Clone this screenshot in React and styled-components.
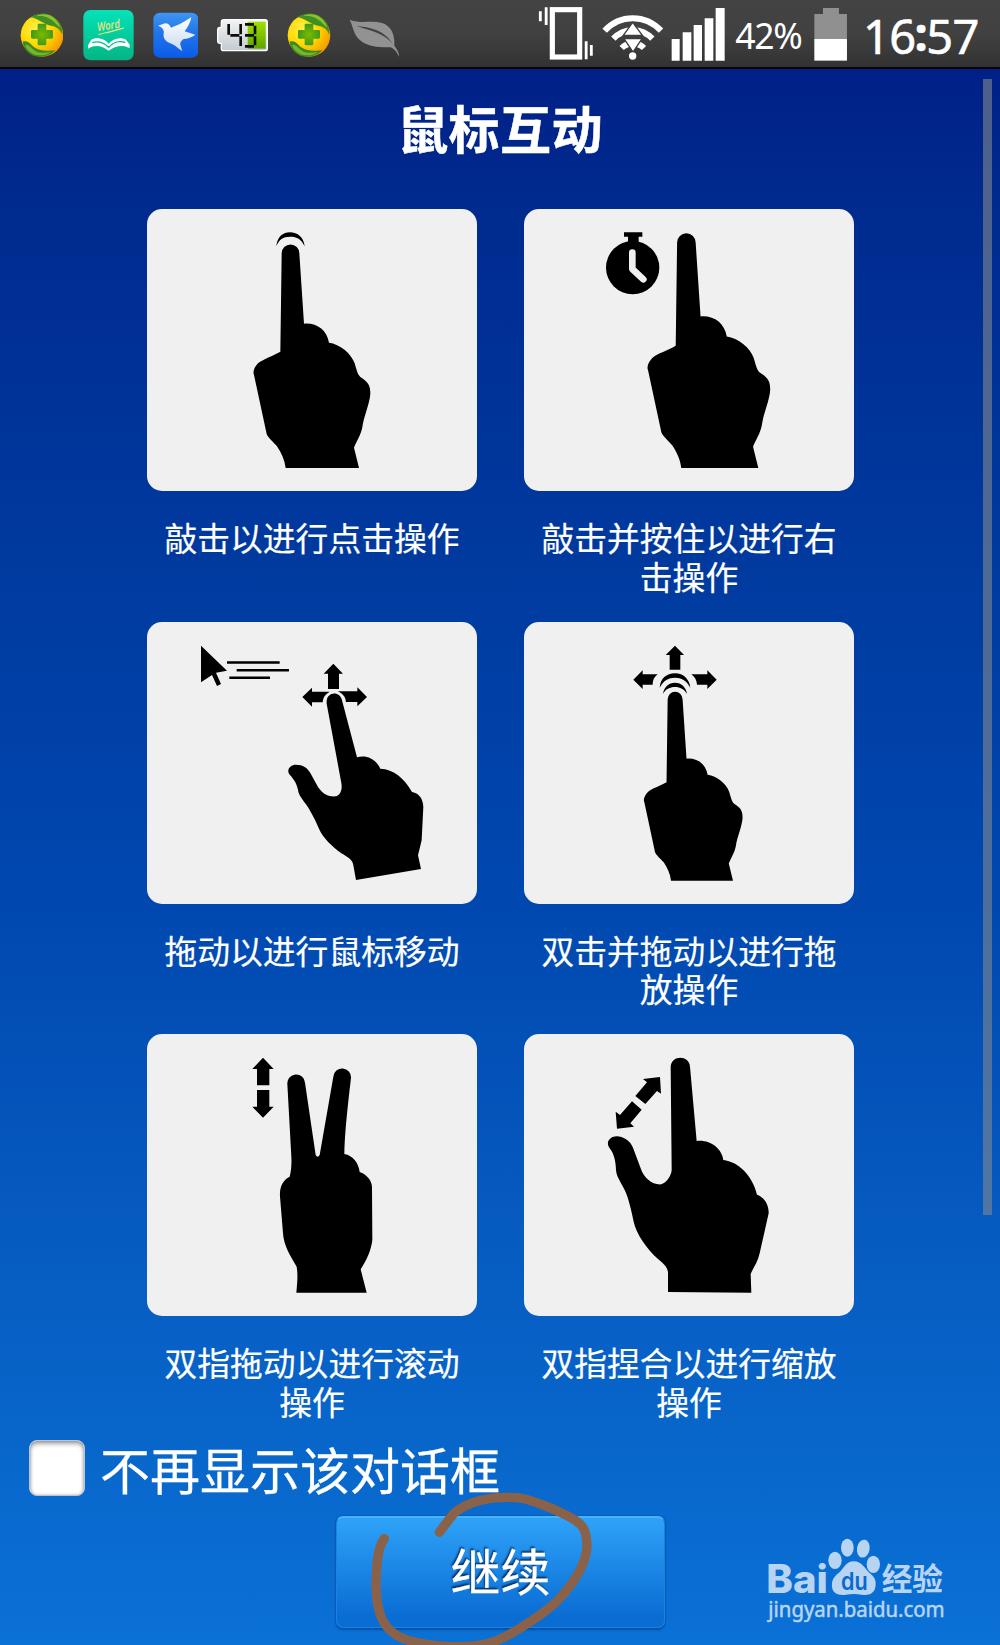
import React from 'react';
import styled, { createGlobalStyle } from 'styled-components';

const GlobalStyle = createGlobalStyle`
  * { box-sizing: border-box; }
  body { margin: 0; background: #0a70d6; }
`;

const cjk = `'Noto Sans CJK SC', 'Noto Sans', sans-serif`;

const Screen = styled.div`
  position: relative;
  display: flex;
  flex-direction: column;
  width: 1000px;
  height: 1645px;
  overflow: hidden;
  color: #fff;
  font-family: ${cjk};
  background: linear-gradient(180deg, #002087 69px, #002a8e 200px, #003a9f 560px, #0048b0 900px, #0659bf 1200px, #0866ca 1440px, #0a71d7 1645px);
`;

const StatusBar = styled.header`
  display: flex;
  flex: none;
  justify-content: space-between;
  height: 69px;
  padding-left: 20px;
  border-bottom: 2px solid #050608;
  background: linear-gradient(180deg, #434343, #414141 50%, #323232);
`;

const Cluster = styled.div`
  display: flex;
  height: 67px;
`;

const Glyph = styled.svg`
  display: block;
  flex: none;
  height: 68px;
  width: ${(p) => p.$w}px;
  margin-right: ${(p) => p.$gap || 0}px;
`;

const StatusText = styled.span`
  font-family: 'Noto Sans', sans-serif;
  font-size: ${(p) => p.$size}px;
  letter-spacing: ${(p) => p.$track || 0}px;
  line-height: ${(p) => p.$line}px;
  width: ${(p) => p.$w}px;
  white-space: nowrap;
  -webkit-text-stroke: ${(p) => p.$stroke || 0}px #fff;
`;

const Colon = styled.span`
  display: inline-block;
  font-weight: 700;
  margin: 0 -1px;
  transform: translateY(-3px);
`;

const Title = styled.h1`
  margin: 21px 0 0;
  height: 75px;
  line-height: 75px;
  text-align: center;
  font-size: 51px;
  letter-spacing: 0.4px;
  font-weight: 700;
  -webkit-text-stroke: 0.5px #fff;
`;

const Grid = styled.main`
  display: grid;
  grid-template-columns: 330px 330px;
  grid-auto-rows: 387.5px;
  gap: 25px 47px;
  margin: 44.3px 0 0 147px;
`;

const Gesture = styled.section`
  display: flex;
  flex-direction: column;
  align-items: center;
`;

const Card = styled.div`
  width: 330px;
  height: 282px;
  border-radius: 15px;
  background: #f0f0f0;
  overflow: hidden;
`;

const Picture = styled.svg`
  display: block;
  width: 330px;
  height: 282px;
`;

const Caption = styled.p`
  width: 304px;
  margin: 27px 0 0;
  font-size: 32.8px;
  line-height: 38.5px;
  font-weight: 400;
  text-align: center;
  -webkit-text-stroke: 0.2px #fff;
`;

const OptOut = styled.label`
  display: flex;
  align-items: center;
  height: 56px;
  margin: 18px 0 0 29px;
`;

const CheckBox = styled.span`
  width: 56px;
  height: 56px;
  margin-right: 15px;
  border-radius: 8px;
  border: 1px solid #b9c4d4;
  background: #fff;
  box-shadow: inset 0 3px 4px rgba(60, 60, 60, 0.45), inset 0 0 3px rgba(60, 60, 60, 0.35);
`;

const OptOutText = styled.span`
  font-size: 50px;
  line-height: 56px;
  font-weight: 400;
  -webkit-text-stroke: 0.3px #fff;
`;

const ContinueButton = styled.button`
  width: 329px;
  height: 112px;
  margin: 20px 0 0 336px;
  padding: 0 0 6px;
  border: 1px solid #1684e0;
  border-top: 2px solid #45b4fb;
  border-radius: 7px;
  background: linear-gradient(180deg, #2ea2f8, #0a6dd4 90%);
  box-shadow: 0 2px 2px #0650a8, 0 0 1px 1px #0a5cba;
  color: #fff;
  font-family: ${cjk};
  font-size: 50px;
  font-weight: 400;
  line-height: 60px;
  text-shadow: -1px -2px 2px rgba(0, 20, 60, 0.75);
  -webkit-text-stroke: 0.3px #fff;
`;

const ScrollThumb = styled.div`
  position: absolute;
  left: 982.5px;
  top: 79px;
  width: 9px;
  height: 1136px;
  background: rgba(128, 136, 144, 0.6);
`;

const Scribble = styled.svg`
  position: absolute;
  left: 320px;
  top: 1480px;
  width: 360px;
  height: 165px;
`;

const Watermark = styled.svg`
  position: absolute;
  left: 740px;
  top: 1500px;
  width: 260px;
  height: 145px;
`;

function Coin({ gap }) {
  return (
    <Glyph viewBox="60 0 130 204" $w={43.3} $gap={gap}>
      <defs>
        <radialGradient id="coin" cx="0.35" cy="0.35" r="0.75">
          <stop offset="0" stopColor="#fff04a" />
          <stop offset="0.5" stopColor="#ffd800" />
          <stop offset="1" stopColor="#f59000" />
        </radialGradient>
        <radialGradient id="plus">
          <stop offset="0" stopColor="#7fb800" />
          <stop offset="1" stopColor="#3f9a1c" />
        </radialGradient>
      </defs>
      <circle cx="126" cy="106" r="64" fill="url(#coin)" />
      <path d="M92 52C120 34 152 38 170 59C184 73 189 91 187 104C181 88 170 80 156 78C132 74 113 55 92 52Z" fill="#3f8f22" />
      <path d="M108 49C130 44 150 53 163 66C171 75 177 80 181 83C176 67 165 53 149 46C133 40 119 42 108 49Z" fill="#8fc12e" />
      <path d="M68 125C78 121 88 126 98 138C115 154 145 153 166 151C150 170 122 174 100 167C82 159 70 143 68 125Z" fill="#3a8a20" />
      <path d="M75 135C86 132 94 145 106 153C121 161 139 159 153 156C140 169 112 168 98 161C87 155 78 146 75 135Z" fill="#77b52c" />
      <path d="M116 71H136Q139 71 139 75V90H155Q159 90 159 94V112Q159 116 155 116H139V132Q139 136 135 136H117Q113 136 113 132V116H97Q93 116 93 112V94Q93 90 97 90H113V75Q113 71 116 71Z" fill="url(#plus)" />
    </Glyph>
  );
}

function WordIcon() {
  return (
    <Glyph viewBox="249 0 153 204" $w={51} $gap={18.7}>
      <defs>
        <linearGradient id="word" x1="0" y1="0" x2="0" y2="1">
          <stop offset="0" stopColor="#05e3b9" />
          <stop offset="1" stopColor="#04b584" />
        </linearGradient>
      </defs>
      <rect x="250" y="30" width="151" height="151" rx="21" fill="url(#word)" />
      <text x="293" y="94" transform="rotate(-9 293 94)" fontFamily="'Open Sans', sans-serif" fontStyle="italic" fontWeight="600" fontSize="36" textLength="69" lengthAdjust="spacingAndGlyphs" fill="#e7e67c">Word</text>
      <path d="M295 104L371 84L320 99" fill="none" stroke="#e7e67c" strokeWidth="3" />
      <path d="M274 119C295 109 315 118 326 131C338 117 359 109 378 119L389 134V144C365 132 345 139 326 152C307 139 287 132 264 146V136Z" fill="#fff" />
      <path d="M277 128C296 121 315 130 326 142C338 129 357 121 376 128" fill="none" stroke="#05b98c" strokeWidth="4" />
    </Glyph>
  );
}

function BirdIcon() {
  return (
    <Glyph viewBox="457 0 137 204" $w={45.7} $gap={18.3}>
      <defs>
        <linearGradient id="sky" x1="0" y1="0" x2="0" y2="1">
          <stop offset="0" stopColor="#3f95f3" />
          <stop offset="0.45" stopColor="#2175e8" />
          <stop offset="1" stopColor="#0c5bea" />
        </linearGradient>
        <linearGradient id="wing" x1="0" y1="0" x2="0" y2="1">
          <stop offset="0" stopColor="#fff" />
          <stop offset="1" stopColor="#c9daf1" />
        </linearGradient>
      </defs>
      <rect x="458" y="38" width="135" height="135" rx="20" fill="url(#sky)" />
      <path d="M472 77L487 72C495 67 506 71 511 83C529 78 551 65 572 52C569 67 562 81 552 94L584 104C575 112 560 116 549 117C542 121 538 128 539 134L545 154C529 141 517 131 505 128C493 122 487 113 489 101C491 91 487 82 472 77Z" fill="url(#wing)" />
    </Glyph>
  );
}

function ChargeIcon() {
  return (
    <Glyph viewBox="649 0 153 204" $w={51} $gap={19.7}>
      <defs>
        <linearGradient id="shell" x1="0" y1="0" x2="0" y2="1">
          <stop offset="0" stopColor="#f2f3f4" />
          <stop offset="1" stopColor="#c3cbd0" />
        </linearGradient>
        <linearGradient id="juice" x1="0" y1="0" x2="0" y2="1">
          <stop offset="0" stopColor="#a0e000" />
          <stop offset="1" stopColor="#5fa400" />
        </linearGradient>
      </defs>
      <path d="M669 59H793Q800 59 800 66V146Q800 152 793 152H669Q662 152 662 146V130H658Q651 130 651 123V89Q651 82 658 82H662V66Q662 59 669 59Z" fill="url(#shell)" stroke="#fff" strokeWidth="4" />
      <rect x="741" y="65" width="54" height="81" fill="url(#juice)" />
      <path d="M684 72V104M720 72V103M720 109V138M689 106H716M733 73H760M763 77V103M763 109V136M733 106H760M733 139H760" fill="none" stroke="#0a0d08" strokeWidth="8" />
    </Glyph>
  );
}

function LeafIcon() {
  return (
    <Glyph viewBox="1048 0 154 204" $w={51.3}>
      <path d="M1050 59C1082 72 1115 61 1145 68C1174 76 1187 104 1184 137C1192 147 1199 159 1199 171C1192 157 1185 148 1174 142C1138 143 1105 139 1084 123C1061 106 1060 77 1050 59Z" fill="#929292" />
      <path d="M1070 77C1101 83 1148 82 1180 132C1149 96 1114 94 1070 77Z" fill="#424242" />
    </Glyph>
  );
}

function VibrateIcon() {
  return (
    <Glyph viewBox="115 0 168 204" $w={56} $gap={8.3}>
      <rect x="158" y="29" width="82" height="142" fill="none" stroke="#fff" strokeWidth="15.5" />
      <path d="M122 34V64M139.500 22V75M259.500 124V178M275 135V167" stroke="#fff" strokeWidth="8.500" />
    </Glyph>
  );
}

function WifiIcon() {
  return (
    <Glyph viewBox="308 0 185 204" $w={61.7} $gap={7}>
      <g fill="none" stroke="#fff" strokeWidth="18">
        <path d="M316 92C362 42 438 42 485 92" />
        <path d="M342 116C374 82 427 82 459 116" />
        <path d="M367 144C385 126 416 126 434 144" />
      </g>
      <path d="M400 67L429 106H372Z" fill="#fff" stroke="#3e3e3e" strokeWidth="4" />
      <path d="M374 116H428L401 156Z" fill="#fff" stroke="#3c3c3c" strokeWidth="4" />
      <path d="M372 111H430" stroke="#3d3d3d" strokeWidth="7" />
      <circle cx="400" cy="168" r="11" fill="#fff" />
    </Glyph>
  );
}

function SignalIcon() {
  return (
    <Glyph viewBox="514 0 162 204" $w={54} $gap={10.5}>
      <path d="M516 117H540V182H516ZM549 97H575V182H549ZM582 75H607V182H582ZM615 55H641V182H615ZM648 24H675V182H648Z" fill="#fff" />
    </Glyph>
  );
}

function BatteryIcon() {
  return (
    <Glyph viewBox="945 0 100 204" $w={33.3} $gap={15.5}>
      <path d="M972 24H1020V42H1044V118H946V42H972Z" fill="#909090" />
      <rect x="946" y="117" width="98" height="65" fill="#fff" />
    </Glyph>
  );
}

const pointing = 'M426 160A26.500 26.500 0 0 1 479 160L493 371C532 368 561 390 568 428C600 432 635 460 645 490C652 515 655 525 662 531C685 546 692 555 692 580C691 610 672 650 668 682C664 705 650 725 643 743L658 804H438C435 780 425 758 412 739C400 725 385 713 381 702L343 525C338 513 346 500 355 490C370 477 400 468 422 455Z';

const TapArt = () => (
  <>
    <path d="M410 139C413 110 430 97 451 97C474 97 492 112 495 139C485 117 472 110 451 110C430 110 418 118 410 139Z" />
    <path d={pointing} />
  </>
);

const HoldArt = () => (
  <>
    <path d="M328 97H383V110H372V128H340V110H328Z" />
    <circle cx="354" cy="203" r="80" />
    <path d="M353 158V207L386 238" fill="none" stroke="#f0f0f0" strokeWidth="20" strokeLinecap="round" strokeLinejoin="round" />
    <path d={pointing} transform="translate(40 -40.2) scale(1.05)" />
  </>
);

const MoveArt = () => (
  <>
    <path d="M184 106L262 181L229 187L244 221L232 227L217 194L184 216Z" />
    <path d="M262 156.500H420M291 179.500H448M269 202H391" stroke="#000" strokeWidth="7.500" />
    <path d="M581 160L610 190H598V236H565V190H552ZM488 260L517 232V244H570V276H517V289ZM682 260L653 231V243H596V275H653V288Z" />
    <circle cx="584" cy="277" r="35" fill="#f0f0f0" />
    <path d="M561 280C557 242 602 240 607 270L652 441C680 433 708 445 722 475C762 476 795 505 817 545C840 548 851 570 851 590L846 690L835 735L844 776L649 809L641 765C639 748 624 740 605 729C578 710 550 682 540 660C530 635 515 605 500 583C478 553 477 550 475 538C469 512 457 501 448 490C440 475 455 463 468 463C490 463 503 472 512 488L535 530C550 553 568 560 590 558C604 552 608 536 605 518Z" />
  </>
);

const DragArt = () => (
  <>
    <path d="M481 106L508 134H497V178H465V134H453ZM356 208L384 180V192H429C418 200 414 210 414 223H384V236ZM606 208L578 180V192H530C541 200 546 210 547 223H578V236Z" />
    <path d="M435 232C437 205 455 189 481 189C507 189 524 207 527 232C515 210 500 202 481 202C462 202 447 210 435 232Z" />
    <path d="M445 251C448 230 462 217 481 217C500 217 514 230 517 251C508 236 497 230 481 230C465 230 453 236 445 251Z" />
    <path d={pointing} transform="translate(99 131.6) scale(0.845)" />
  </>
);

const ScrollArt = () => (
  <>
    <path d="M370 113L402 147H389V196H352V147H338ZM370 293L402 260H389V210H352V260H338Z" />
    <path d="M443 192A26.500 26.500 0 0 1 496 188L528 405Q534 416 540 405L581 170A26.500 26.500 0 0 1 634 174Q614 340 614 402C640 406 657 430 660 456C680 463 696 480 697 500L698 660C695 690 680 722 663 748L681 818H470C473 785 475 765 471 740C450 705 432 675 430 640L421 530C419 500 430 480 450 470C455 450 456 430 455 410Z" />
  </>
);

const PinchArt = () => (
  <>
    <path d="M436 171L439 221L427 213L392 252L362 228L397 187L385 177ZM307 326L358 320L347 310L381 269L352 244L316 285L303 275Z" />
    <path d="M468 142C468 104 524 104 526 140L546 363C585 358 622 385 626 420C670 425 713 465 727 524C750 532 763 557 762 580L735 700C730 725 715 745 708 762L710 818L460 816V757C458 740 445 729 430 717C395 685 365 642 357 605C350 570 340 530 330 510C312 475 306 470 304 450C303 420 297 400 285 385C270 364 290 349 305 349C330 350 348 365 355 383L378 445C388 475 412 495 440 493C458 487 470 465 471 450Z" />
  </>
);

const gestures = [
  { text: '敲击以进行点击操作', Art: TapArt, box: '22 27 990 846' },
  { text: '敲击并按住以进行右击操作', Art: HoldArt, box: '28 27 990 846' },
  { text: '拖动以进行鼠标移动', Art: MoveArt, box: '22 35 990 846' },
  { text: '双击并拖动以进行拖放操作', Art: DragArt, box: '28 35 990 846' },
  { text: '双指拖动以进行滚动操作', Art: ScrollArt, box: '22 42 990 846' },
  { text: '双指捏合以进行缩放操作', Art: PinchArt, box: '28 42 990 846' },
];

export default function App() {
  return (
    <Screen>
      <GlobalStyle />
      <StatusBar>
        <Cluster>
          <Coin gap={19.7} />
          <WordIcon />
          <BirdIcon />
          <ChargeIcon />
          <Coin gap={18.7} />
          <LeafIcon />
        </Cluster>
        <Cluster>
          <VibrateIcon />
          <WifiIcon />
          <SignalIcon />
          <StatusText $size={35.5} $line={71} $track={-1.3} $w={79}>42%</StatusText>
          <BatteryIcon />
          <StatusText $size={47} $line={72} $track={-0.6} $w={137} $stroke={0.6}>16<Colon>:</Colon>57</StatusText>
        </Cluster>
      </StatusBar>
      <Title>鼠标互动</Title>
      <Grid>
        {gestures.map(({ text, Art, box }) => (
          <Gesture key={text}>
            <Card>
              <Picture viewBox={box}><Art /></Picture>
            </Card>
            <Caption>{text}</Caption>
          </Gesture>
        ))}
      </Grid>
      <OptOut>
        <CheckBox />
        <OptOutText>不再显示该对话框</OptOutText>
      </OptOut>
      <ContinueButton>继续</ContinueButton>
      <ScrollThumb />
      <Scribble viewBox="0 0 1080 495">
        <path d="M193 176C171 205 169 260 168 320C170 400 190 442 230 466C290 500 440 512 520 486C580 465 680 392 710 365C760 312 800 250 801 195C799 150 790 138 765 120C700 82 620 55 590 53C500 48 440 70 405 97C390 112 375 135 358 157" fill="none" stroke="#8a6249" strokeWidth="28" strokeLinecap="round" strokeLinejoin="round" />
      </Scribble>
      <Watermark viewBox="0 0 780 435" fill="#b7d5f3">
        <text x="79" y="280" fontFamily="Inter, sans-serif" fontWeight="800" fontSize="117" textLength="185" lengthAdjust="spacingAndGlyphs">Bai</text>
        <ellipse cx="285" cy="181" rx="20" ry="26" />
        <ellipse cx="322" cy="143" rx="19" ry="27" />
        <ellipse cx="370" cy="146" rx="19" ry="27" transform="rotate(10 370 146)" />
        <ellipse cx="400" cy="193" rx="20" ry="26" />
        <path d="M341 184C366 184 374 206 389 219C404 230 410 244 406 262C402 282 386 287 365 284Q341 280 318 284C294 287 278 280 276 260C274 240 282 230 296 219C312 206 317 184 341 184Z" />
        <text x="303" y="269" fontFamily="Inter, sans-serif" fontWeight="600" fontSize="73" textLength="80" lengthAdjust="spacingAndGlyphs" fill="#0a69cf">du</text>
        <text x="425" y="271" fontFamily="'Noto Sans CJK SC', sans-serif" fontWeight="700" fontSize="92" textLength="184" lengthAdjust="spacingAndGlyphs">经验</text>
        <text x="85" y="351" fontFamily="'Noto Sans', sans-serif" fontSize="63" textLength="529" lengthAdjust="spacingAndGlyphs" stroke="#b7d5f3" strokeWidth="1.5">jingyan.baidu.com</text>
      </Watermark>
    </Screen>
  );
}
